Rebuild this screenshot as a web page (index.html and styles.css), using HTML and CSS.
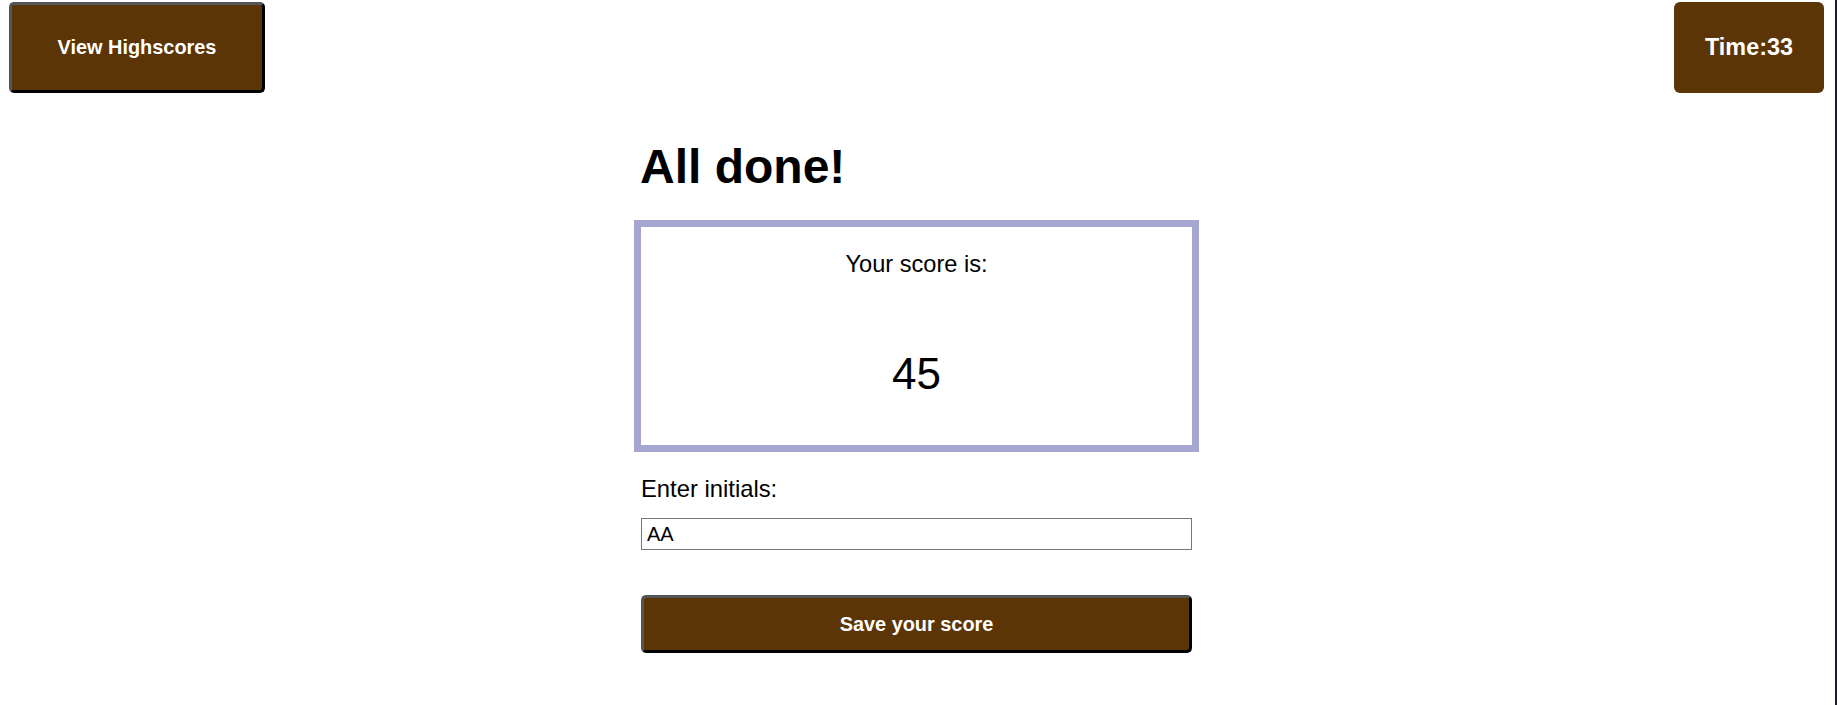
FILE: index.html
```html
<!DOCTYPE html>
<html lang="en">
<head>
<meta charset="utf-8">
<title>Quiz - All done</title>
<link rel="stylesheet" href="styles.css">
</head>
<body>
<header class="topbar">
  <button class="btn btn-highscores" type="button">View Highscores</button>
  <div class="timer">Time:33</div>
</header>
<main class="panel">
  <h1 class="title">All done!</h1>
  <section class="score-box">
    <p class="score-label">Your score is:</p>
    <p class="score-value">45</p>
  </section>
  <label class="initials-label" for="initials">Enter initials:</label>
  <input class="initials-input" id="initials" type="text" value="AA">
  <button class="btn btn-save" type="button">Save your score</button>
</main>
</body>
</html>
```
FILE: styles.css
```css
html {
  margin: 0;
  padding: 0;
  border-right: 2px solid #1c1c28;
  min-height: 100%;
  background: #ffffff;
}

body {
  margin: 0;
  font-family: "Liberation Sans", Arial, sans-serif;
  color: #000000;
}

.topbar {
  display: flex;
  justify-content: space-between;
  align-items: flex-start;
  padding: 2px 11px 0 9px;
}

.btn {
  font-family: "Liberation Sans", Arial, sans-serif;
  font-weight: bold;
  font-size: 19.9px;
  color: #ffffff;
  background: #5b3505;
  border: 3px solid;
  border-color: #555555 #000000 #000000 #555555;
  border-radius: 5px;
  box-sizing: border-box;
  padding: 0;
  cursor: pointer;
}

.btn-highscores {
  width: 256px;
  height: 91px;
}

.timer {
  width: 150px;
  height: 91px;
  box-sizing: border-box;
  display: flex;
  align-items: center;
  justify-content: center;
  background: #5b3505;
  color: #ffffff;
  font-weight: bold;
  font-size: 23.4px;
  border-radius: 6px;
}

.panel {
  width: 565px;
  margin: 0 auto;
  display: flex;
  flex-direction: column;
  position: relative;
  left: -1px;
}

.title {
  margin: 50px 0 0 0;
  padding-left: 6px;
  font-size: 48px;
  line-height: 48px;
  font-weight: bold;
}

.score-box {
  margin-top: 29px;
  border: 7px solid #a6a6d2;
  padding: 26.2px 0 49.3px;
  display: flex;
  flex-direction: column;
  align-items: center;
}

.score-label {
  margin: 0;
  font-size: 23.6px;
  line-height: 23.6px;
}

.score-value {
  margin: 75px 0 0 0;
  font-size: 44px;
  line-height: 44px;
}

.initials-label {
  margin: 24.8px 7px 0;
  font-size: 23.8px;
  line-height: 23.8px;
}

.initials-input {
  margin: 17.4px 7px 0;
  height: 32px;
  box-sizing: border-box;
  border: 1px solid #767676;
  padding: 0 5px;
  font-family: "Liberation Sans", Arial, sans-serif;
  font-size: 20px;
  color: #000000;
  outline: none;
}

.btn-save {
  margin: 45px 7px 0;
  height: 58px;
}
```
